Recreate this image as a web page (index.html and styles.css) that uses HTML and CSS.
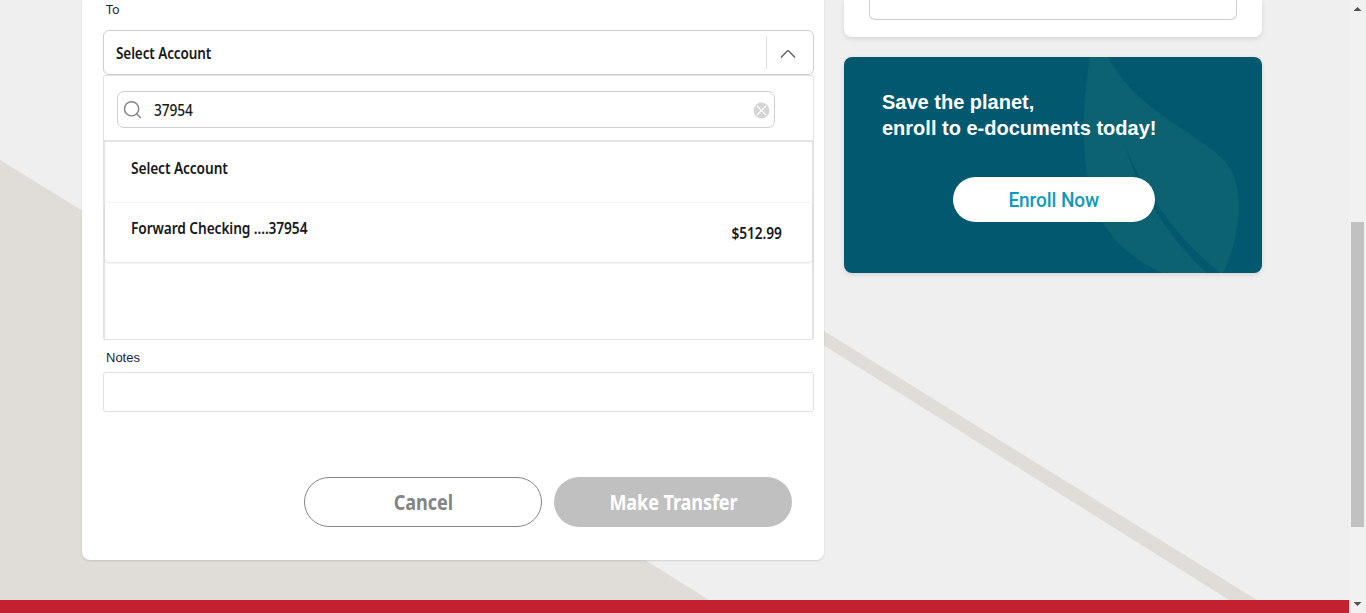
FILE: index.html
```html
<!DOCTYPE html>
<html lang="en">
<head>
<meta charset="utf-8">
<title>Make a Transfer</title>
<link rel="stylesheet" href="styles.css">
</head>
<body>
<div class="viewport">
  <div class="page">
    <svg class="backdrop" viewBox="0 0 1349 600" aria-hidden="true">
      <path d="M0 160L82 210.500L645 560L709 600H0Z"/>
      <path d="M800 316L824 331L1257 600H1229L824 345.500L800 330Z"/>
    </svg>
    <main class="columns">
      <form class="transfer">
        <label class="label label-to">To</label>
        <div class="select">
          <span class="face select-value">Select Account</span>
          <span class="toggle"><svg width="16" height="10" viewBox="0 0 16 10"><path d="M1 8.500L7 2.200Q8 1.300 9 2.200L15 8.500"/></svg></span>
        </div>
        <div class="dropdown">
          <div class="search-row">
            <div class="search">
              <svg class="magnifier" width="18" height="18" viewBox="0 0 18 18"><circle cx="7.600" cy="7.800" r="7.100"/><path d="M12.600 12.800L16.800 17.100"/></svg>
              <span class="face query">37954</span>
              <svg class="clear" width="17" height="17" viewBox="0 0 17 17"><circle cx="8.500" cy="8.500" r="8.500"/><path d="M4 4L13 13M13 4L4 13"/></svg>
            </div>
          </div>
          <div class="options">
            <div class="option"><span class="face option-all">Select Account</span></div>
            <div class="option"><span class="face option-name">Forward Checking ....37954</span><span class="face amount">$512.99</span></div>
          </div>
        </div>
        <label class="label label-notes">Notes</label>
        <div class="notes"></div>
        <div class="actions">
          <button type="button" class="btn cancel"><span class="face">Cancel</span></button>
          <button type="button" class="btn submit"><span class="face">Make Transfer</span></button>
        </div>
      </form>
      <aside class="side">
        <div class="panel"><div class="panel-box"></div></div>
        <section class="promo">
          <svg class="leaf" width="418" height="216" viewBox="0 0 418 216" aria-hidden="true">
            <path class="leaf-body" d="M246 0H264C276 24 297 44 326 64C358 85 379 98 387 113C396 130 396 154 393 170C390 190 385 204 379 216H319C286 202 261 178 251 148C235 105 239 42 246 0Z"/>
            <path class="leaf-vein" d="M278 76C284 104 299 126 317 153C336 180 355 198 376 216H363C343 198 323 174 307 147C291 122 283 98 278 76Z"/>
          </svg>
          <h2>Save the planet,<br>enroll to e-documents today!</h2>
          <button type="button" class="enroll"><span class="face">Enroll Now</span></button>
        </section>
      </aside>
    </main>
    <footer class="footer"></footer>
  </div>
  <div class="scrollbar"><i class="arrow up"></i><i class="thumb"></i><i class="arrow down"></i></div>
</div>
</body>
</html>
```
FILE: styles.css
```css
* { box-sizing: border-box; }
body { margin: 0; overflow: hidden; font-family: "Liberation Sans", sans-serif; color: #17181a; }
.viewport { display: flex; width: 1366px; height: 613px; overflow: hidden; }
.page { position: relative; display: flex; flex-direction: column; width: 1349px; height: 613px; background: #efefef; }
.backdrop { position: absolute; top: 0; left: 0; width: 1349px; height: 600px; fill: #e0ddd8; }
.columns { position: relative; display: flex; align-items: flex-start; gap: 20px; height: 600px; padding-left: 82px; }
.footer { position: relative; height: 13px; background: #c32130; }

.transfer { display: flex; flex-direction: column; width: 742px; height: 560px; padding: 0 10px 0 21px; background: #fff; border-radius: 0 0 8px 8px; box-shadow: 0 1px 2px rgba(0, 0, 0, .13); }
.label { padding-left: 3px; font-size: 13px; line-height: 20px; color: #16263a; }
.label-to { height: 30px; font-size: 12.500px; font-family: "Noto Sans", sans-serif; }
.face { display: inline-block; font-family: "Noto Sans", sans-serif; font-weight: 600; white-space: nowrap; transform: scaleX(.885); transform-origin: left center; font-size: 15.500px; line-height: 20px; letter-spacing: -.1px; }
.select { display: flex; align-items: center; justify-content: space-between; width: 711px; height: 45px; padding-left: 12px; border: 1px solid #cecece; border-radius: 6px; }
.select-value { transform: scaleX(.87); }
.toggle { display: flex; align-items: center; width: 47px; height: 33px; padding-left: 13px; padding-top: 2px; border-left: 1px solid #dedede; fill: none; stroke: #626262; stroke-width: 1.400; }
.dropdown { width: 711px; height: 265px; border: 1px solid #e1e1e1; border-radius: 2px; }
.search-row { height: 64px; padding: 15px 0 0 13px; }
.search { display: flex; align-items: center; width: 658px; height: 37px; padding: 0 4px 0 6px; border: 1px solid #cecece; border-radius: 7px; }
.magnifier { fill: none; stroke: #858585; stroke-width: 1.400; }
.query { flex: 1; margin-left: 12px; font-weight: 500; }
.clear { margin-top: 2px; fill: #d5d5d5; stroke: #fff; stroke-width: 1.200; }
.options { height: 199px; border: solid #e3e3e3; border-width: 2px 1px 0; }
.option { display: flex; justify-content: space-between; height: 60px; padding: 16px 30px 0 26px; border-radius: 4px; box-shadow: 0 1px 1px rgba(0, 0, 0, .03); }
.option + .option { padding-top: 15px; border-top: 1px solid #f5f5f5; box-shadow: 0 1px 2px rgba(0, 0, 0, .14); }
.amount { margin-top: 5px; transform-origin: right center; }
.label-notes { margin-top: 8px; height: 24px; font-size: 13px; }
.notes { width: 711px; height: 40px; border: 1px solid #dfdfdf; border-radius: 3px; }
.actions { display: flex; gap: 12px; margin: 65px 0 0 201px; }
.btn { width: 238px; height: 50px; padding: 0; border-radius: 25px; text-align: center; }
.btn .face { font-size: 21px; line-height: 26px; font-weight: 700; transform: scaleX(.86); transform-origin: center; }
.cancel { border: 1px solid #858585; background: #fff; color: #858585; }
.submit { border: 0; background: #c0c0c0; color: #fff; }

.side { display: flex; flex-direction: column; gap: 20px; width: 418px; }
.panel { height: 37px; padding: 0 25px; background: #fff; border-radius: 0 0 8px 8px; box-shadow: 0 2px 5px rgba(0, 0, 0, .1); }
.panel-box { height: 20px; border: 1px solid #cecece; border-top: 0; border-radius: 0 0 6px 6px; }
.promo { position: relative; height: 216px; padding: 32px 0 0 38px; border-radius: 8px; overflow: hidden; background: #02586e; box-shadow: 0 2px 5px rgba(0, 0, 0, .1); }
.leaf { position: absolute; top: 0; left: 0; }
.leaf-body { fill: #0d6272; }
.leaf-vein { fill: #02586e; }
.promo h2 { position: relative; margin: 0; color: #fff; font-size: 20px; line-height: 26px; }
.enroll { position: relative; display: block; width: 202px; height: 45px; margin: 36px 0 0 71px; padding: 1px 0 0; border: 0; border-radius: 23px; background: #fff; color: #129bb7; }
.enroll .face { font-family: Roboto, sans-serif; font-size: 20.500px; line-height: 26px; font-weight: 500; transform: scaleX(.93); transform-origin: center; }

.scrollbar { position: relative; display: flex; flex-direction: column; align-items: center; width: 17px; height: 613px; background: #f1f1f1; }
.arrow { width: 8px; height: 4px; background: #505050; }
.up { margin-top: 7px; clip-path: polygon(50% 0, 100% 100%, 0 100%); }
.thumb { width: 13px; height: 305px; margin-top: 211px; background: #c1c1c1; }
.down { margin-top: 75px; clip-path: polygon(0 0, 100% 0, 50% 100%); }
```
